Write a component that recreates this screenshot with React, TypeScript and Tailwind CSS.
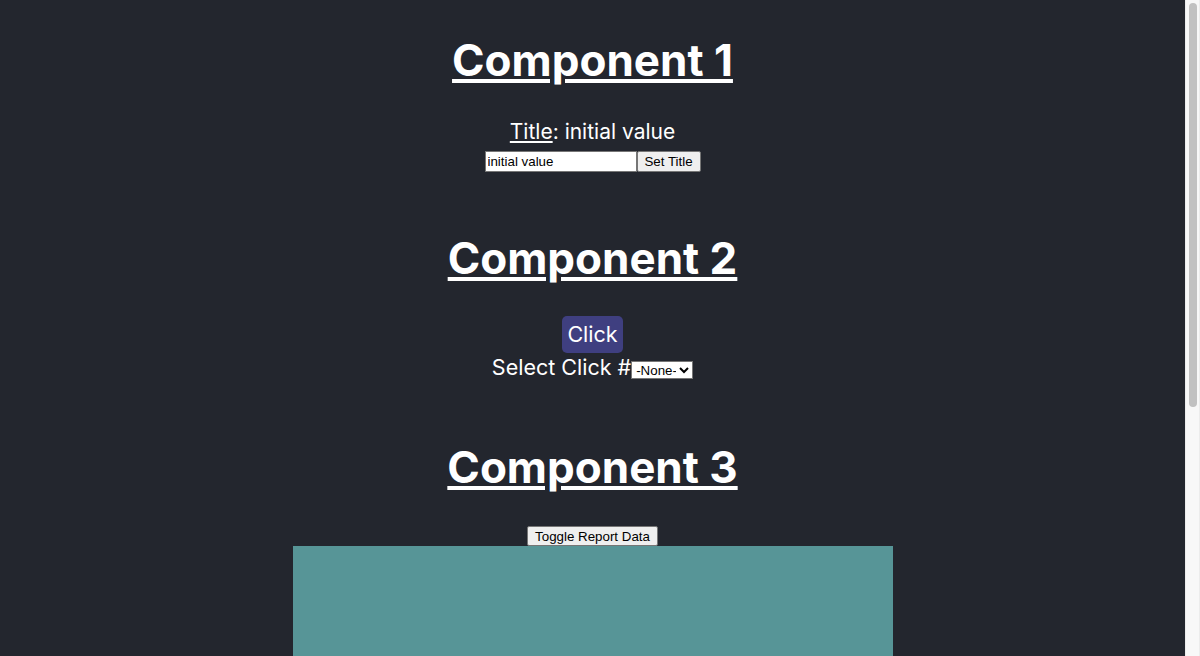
import { useState } from 'react';

const nativeCtl = "font-['Liberation_Sans',Arial,sans-serif] text-[13.33px] text-black";

const App = () => {
  const [title, setTitle] = useState('initial value');
  const [draft, setDraft] = useState('initial value');
  const [clicks, setClicks] = useState(0);
  const [showReport, setShowReport] = useState(true);

  return (
    <div className="min-h-screen flex bg-[#23262e]">
      <div className="flex-1 text-white text-center font-['Inter',sans-serif] text-[21.5px] flex flex-col items-center pb-[20px]">
        {/* Component 1 */}
        <h1 className="mt-[34px] text-[44px] font-bold leading-[53px] underline">Component 1</h1>
        <p className="mt-[32px] leading-[26px] text-[21px]">
          <span className="underline">Title</span>: {title}
        </p>
        <div className="mt-[6px] flex justify-center">
          <input
            value={draft}
            onChange={(e) => setDraft(e.target.value)}
            className={`${nativeCtl} w-[152px] h-[21px] bg-white border border-[#767676] px-[2px]`}
          />
          <button
            onClick={() => setTitle(draft)}
            className={`${nativeCtl} h-[21px] w-[64px] bg-[#efefef] border border-[#767676] rounded-[2px]`}
          >
            Set Title
          </button>
        </div>

        {/* Component 2 */}
        <h1 className="mt-[60px] text-[44px] font-bold leading-[53px] underline">Component 2</h1>
        <button
          onClick={() => setClicks(clicks + 1)}
          className="mt-[31px] h-[37px] px-[5px] rounded-[5px] bg-[#3f3f80] text-white text-[21.5px] leading-[37px]"
        >
          Click
        </button>
        <div className="mt-[1px] h-[26px] leading-[26px]">
          Select Click #
          <select className={`${nativeCtl} h-[18px] w-[62px] bg-white border border-[#767676] align-baseline`}>
            <option>-None-</option>
            {Array.from({ length: clicks }, (_, i) => (
              <option key={i}>{i + 1}</option>
            ))}
          </select>
        </div>

        {/* Component 3 */}
        <h1 className="mt-[61px] text-[44px] font-bold leading-[53px] underline">Component 3</h1>
        <button
          onClick={() => setShowReport(!showReport)}
          className={`${nativeCtl} mt-[32px] h-[20px] px-[7.5px] bg-[#efefef] border border-[#767676] rounded-[2px]`}
        >
          Toggle Report Data
        </button>
        {showReport && <div className="w-[600px] h-[500px] bg-[#579597]" />}
      </div>

      {/* scrollbar */}
      <div className="w-[15px] bg-[#f8f8f8] border-l border-[#ececec] border-r">
        <div className="sticky top-0 pt-[3px] pl-[3px]">
          <div className="w-[8px] h-[404px] rounded-full bg-[#c1c1c1]" />
        </div>
      </div>
    </div>
  );
};

export default App;
